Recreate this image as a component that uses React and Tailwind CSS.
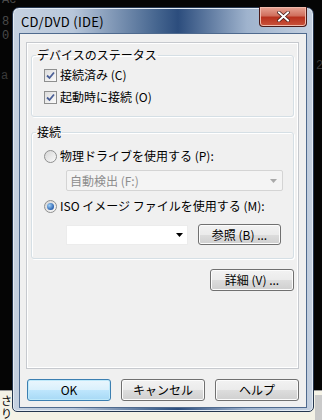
const FONT = { fontFamily: '"Noto Sans CJK JP", "Liberation Sans", sans-serif' };

function CheckBox() {
  return (
    <span className="relative flex h-[13px] w-[13px] shrink-0 items-center justify-center border border-[#8e8f8f] bg-[linear-gradient(135deg,#dcdcdc,#fbfbfb)]">
      <svg width="9" height="9" viewBox="0 0 9 9">
        <path d="M1 4.5 L3.5 7 L8 1.5" fill="none" stroke="#4a5f97" strokeWidth="1.8" />
      </svg>
    </span>
  );
}

function Radio({ checked }) {
  return (
    <span className="flex h-[13px] w-[13px] shrink-0 items-center justify-center rounded-full border border-[#8e8f8f] bg-[linear-gradient(135deg,#d6d6d6,#fafafa)]">
      {checked && (
        <span className="h-[7px] w-[7px] rounded-full bg-[radial-gradient(circle_at_35%_35%,#9fd0f7,#2b62b0_70%,#1e4a8c)]" />
      )}
    </span>
  );
}

function Button({ children, primary, className = "" }) {
  return (
    <div
      className={`flex items-center justify-center rounded-[3px] border text-[12px] text-black ${
        primary
          ? "border-[#3c7fb1] bg-[linear-gradient(#eaf6fd_0%,#d9f0fc_50%,#bee6fd_51%,#a7d9f5_100%)] shadow-[inset_0_0_0_1px_#bfe9fa]"
          : "border-[#707070] bg-[linear-gradient(#f2f2f2_0%,#ebebeb_50%,#dddddd_51%,#cfcfcf_100%)] shadow-[inset_0_0_0_1px_#fcfcfc]"
      } ${className}`}
    >
      {children}
    </div>
  );
}

function GroupBox({ label, className = "", children }) {
  return (
    <fieldset className={`mx-[4px] rounded-[3px] border border-[#d5dfe5] shadow-[inset_1px_1px_0_#fff,1px_1px_0_#fff] ${className}`}>
      <legend className="ml-[4px] px-[1px] text-[12px] leading-[14px] text-black">{label}</legend>
      {children}
    </fieldset>
  );
}

export default function App() {
  return (
    <div className="relative h-[420px] w-[322px] overflow-hidden bg-[#050505]" style={FONT}>
      {/* console text behind */}
      <div className="absolute left-[2px] top-[-6px] font-mono text-[12px] leading-[13px] text-[#4a4a4a]">Ac</div>
      <div className="absolute left-[2px] top-[16px] font-mono text-[12px] leading-[13px] text-[#4a4a4a]">8</div>
      <div className="absolute left-[2px] top-[30px] font-mono text-[12px] leading-[13px] text-[#4a4a4a]">0</div>
      <div className="absolute left-[1px] top-[70px] font-mono text-[12px] leading-[13px] text-[#3a3a3a]">a</div>
      <div className="absolute left-[316px] top-[60px] font-mono text-[12px] leading-[13px] text-[#3a3a3a]">2</div>

      {/* window behind at the bottom */}
      <div className="absolute left-0 top-[390px] h-[30px] w-[322px] border-t border-[#9a9a9a] bg-[#f4f2e6]" />
      <div className="absolute left-[1px] top-[394px] text-[11px] leading-[12px] text-black">さ</div>
      <div className="absolute left-[1px] top-[407px] text-[11px] leading-[12px] text-black">り</div>
      <div className="absolute left-[315px] top-[395px] h-[25px] w-[7px] bg-[#c9c9c9]" />

      {/* dialog */}
      <div className="absolute left-[12px] top-[7px] flex h-[405px] w-[302px] flex-col rounded-t-[7px] rounded-b-[5px] border border-[#25364f] bg-[linear-gradient(90deg,#c5d1e0_0%,#b7c6da_20%,#45658f_48%,#2c4d7d_55%,#9fb3cd_78%,#c4d0e0_100%)] px-[6px] pb-[3px] shadow-[inset_0_0_0_1px_#e4ecf5]">
        {/* title bar */}
        <div className="flex h-[25px] shrink-0 items-center">
          <div className="pl-[2px] pt-[3px] text-[13px] leading-[14px] tracking-[0.3px] text-black">CD/DVD (IDE)</div>
          <div className="ml-auto -mt-[1px] flex h-[20px] w-[48px] items-center justify-center self-start rounded-b-[4px] border border-t-0 border-[#4a1a18] bg-[linear-gradient(#e8a595_0%,#d0705e_45%,#b8321e_55%,#c9533c_100%)] shadow-[inset_0_0_0_1px_#f0b9ab]">
            <svg width="13" height="11" viewBox="0 0 13 11">
              <path d="M2 1.5 L11 9.5 M11 1.5 L2 9.5" stroke="#3a1510" strokeWidth="3.4" strokeLinecap="square" />
              <path d="M2 1.5 L11 9.5 M11 1.5 L2 9.5" stroke="#ffffff" strokeWidth="2" strokeLinecap="square" />
            </svg>
          </div>
        </div>

        {/* client area */}
        <div className="flex flex-1 flex-col border border-[#4f6a8e] bg-[#f0f0f0] pl-[6px] pr-[7px] pt-[8px]">
          <div className="flex h-[327px] flex-col border border-[#c6c9ce] shadow-[inset_1px_1px_0_#fff,inset_-1px_-1px_0_#fff]">
            <GroupBox label="デバイスのステータス" className="mt-[5px]">
              <div className="pb-[8px] pl-[12px] pt-[2px]">
                <div className="flex h-[22px] items-center gap-[3px] text-[12px] text-black">
                  <CheckBox />
                  <span>接続済み (C)</span>
                </div>
                <div className="flex h-[22px] items-center gap-[3px] text-[12px] text-black">
                  <CheckBox />
                  <span>起動時に接続 (O)</span>
                </div>
              </div>
            </GroupBox>

            <GroupBox label="接続" className="mt-[8px]">
              <div className="pb-[13px] pl-[12px] pt-[6px]">
                <div className="flex h-[22px] items-center gap-[3px] text-[12px] text-black">
                  <Radio />
                  <span>物理ドライブを使用する (P):</span>
                </div>
                <div className="ml-[22px] mt-[3px] flex h-[21px] w-[217px] items-center rounded-[2px] border border-[#d4d4d4] bg-[#f4f4f4] pl-[3px] pr-[5px] text-[12px] text-[#8d8d8d]">
                  <span>自動検出 (F:)</span>
                  <svg className="ml-auto" width="7" height="4" viewBox="0 0 7 4">
                    <path d="M0 0 L7 0 L3.5 4 Z" fill="#a9a9a9" />
                  </svg>
                </div>
                <div className="mt-[4px] flex h-[22px] items-center gap-[3px] text-[12px] text-black">
                  <Radio checked />
                  <span>ISO イメージ ファイルを使用する (M):</span>
                </div>
                <div className="ml-[22px] mt-[7px] flex items-center gap-[10px]">
                  <div className="flex h-[20px] w-[122px] items-center border border-[#ececec] bg-white pr-[4px]">
                    <svg className="ml-auto" width="7" height="4" viewBox="0 0 7 4">
                      <path d="M0 0 L7 0 L3.5 4 Z" fill="#000" />
                    </svg>
                  </div>
                  <Button className="h-[21px] w-[83px]">参照 (B) ...</Button>
                </div>
              </div>
            </GroupBox>

            <div className="mr-[4px] mt-[10px] flex justify-end">
              <Button className="h-[22px] w-[84px]">詳細 (V) ...</Button>
            </div>
          </div>

          <div className="mt-[10px] flex gap-[10px] pl-[1px]">
            <Button primary className="h-[22px] w-[84px]">OK</Button>
            <Button className="h-[22px] w-[84px]">キャンセル</Button>
            <Button className="h-[22px] w-[84px]">ヘルプ</Button>
          </div>
        </div>
      </div>
    </div>
  );
}
